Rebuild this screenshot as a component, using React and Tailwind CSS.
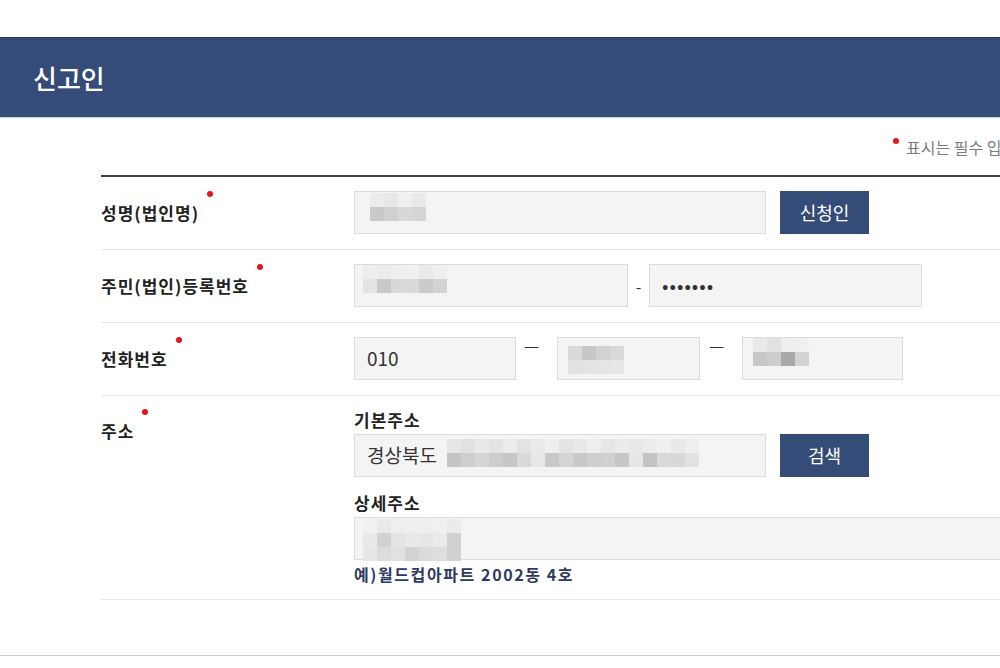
import React from "react";

const NAME_CELLS = [
  ["#ececec", "#e7e7e7", "#efefef", "#e9e9e9"],
  ["#c9c9c9", "#d0d0d0", "#d8d8d8", "#d5d5d5"],
];
const RRN_CELLS = [
  ["#eeeeee", "#ebebeb", "#efefef", "#f0f0f0", "#eaeaea", "#efefef"],
  ["#e4e4e4", "#c9c9c9", "#d8d8d8", "#d9d9d9", "#cbcbcb", "#d3d3d3"],
];
const PHONE_MID_CELLS = [
  ["#d9d9d9", "#c7c7c7", "#d2d2d2", "#d9d9d9"],
  ["#e2e2e2", "#e3e3e3", "#e5e5e5", "#e7e7e7"],
];
const PHONE_END_CELLS = [
  ["#e9e9e9", "#e2e2e2", "#eeeeee", "#f0f0f0"],
  ["#c7c7c7", "#cdcdcd", "#a9a9a9", "#d3d3d3"],
];
const ADDR_CELLS = [
  ["#e6e6e6", "#e1e1e1", "#e9e9e9", "#e4e4e4", "#ececec", "#e3e3e3", "#eaeaea", "#efefef", "#e4e4e4", "#e8e8e8", "#eeeeee", "#e6e6e6", "#ebebeb", "#e8e8e8", "#ececec", "#f0f0f0", "#e9e9e9", "#eeeeee"],
  ["#c4c4c4", "#cfcfcf", "#d6d6d6", "#cdcdcd", "#c6c6c6", "#dadada", "#e8e8e8", "#c8c8c8", "#d4d4d4", "#c9c9c9", "#cfcfcf", "#d1d1d1", "#c6c6c6", "#e6e6e6", "#c3c3c3", "#d9d9d9", "#d8d8d8", "#e2e2e2"],
];
const DETAIL_CELLS = [
  ["#f0f0f0", "#e9e9e9", "#eeeeee", "#efefef", "#eeeeee", "#f0f0f0", "#ebebeb"],
  ["#e9e9e9", "#d2d2d2", "#e4e4e4", "#e9e9e9", "#e6e6e6", "#ebebeb", "#d0d0d0"],
  ["#e6e6e6", "#dcdcdc", "#e1e1e1", "#d3d3d3", "#dbdbdb", "#dedede", "#d1d1d1"],
];

function Mosaic({ cells }) {
  return (
    <div className="flex flex-col">
      {cells.map((row, r) => (
        <div key={r} className="flex">
          {row.map((c, i) => (
            <span key={i} className="block h-[14px] w-[14px]" style={{ backgroundColor: c }} />
          ))}
        </div>
      ))}
    </div>
  );
}

function Field({ className = "", children }) {
  return (
    <div className={`flex h-[43px] border border-[#dcdcdc] bg-[#f4f4f4] text-[19px] text-[#333] ${className}`}>
      {children}
    </div>
  );
}

function NavyButton({ children }) {
  return (
    <button type="button" className="ml-[14px] h-[43px] w-[89px] bg-[#354b78] text-[18px] text-white">
      {children}
    </button>
  );
}

function Label({ children, top = false }) {
  return (
    <div className={`w-[253px] shrink-0 ${top ? "self-start pt-[9px]" : ""}`}>
      <span className="relative text-[17px] font-bold leading-[20px] tracking-[1px] text-[#222]">
        {children}
        <span className="absolute -right-[14px] -top-[9px] h-[6px] w-[6px] rounded-full bg-[#e3141b]" />
      </span>
    </div>
  );
}

export default function App() {
  return (
    <div className="h-[668px] w-[1000px] overflow-hidden bg-white font-['Noto_Sans_CJK_KR',sans-serif]">
      <div className="mt-[37px] flex h-[81px] items-center border-t border-b border-t-[#2b3c60] border-b-[#c8ced9] bg-[#354b78] pl-[33px]">
        <h2 className="text-[26px] font-medium text-white">신고인</h2>
      </div>

      <div className="h-[57px] whitespace-nowrap pl-[893px] pt-[17px]">
        <span className="relative inline-block h-[6px] w-[6px] -translate-y-[10px] rounded-full bg-[#e3141b]" />
        <span className="ml-[7px] text-[16px] text-[#7c7c7c]">표시는 필수 입력</span>
      </div>

      <div className="ml-[101px] w-[1000px] border-t-2 border-[#3b4556]">
        <div className="flex items-center border-b border-[#e6e6e6] pb-[15px] pt-[14px]">
          <Label>성명(법인명)</Label>
          <Field className="w-[412px] pl-[15px] pt-[1px]">
            <Mosaic cells={NAME_CELLS} />
          </Field>
          <NavyButton>신청인</NavyButton>
        </div>

        <div className="flex items-center border-b border-[#e6e6e6] pb-[15px] pt-[14px]">
          <Label>주민(법인)등록번호</Label>
          <Field className="w-[274px] pl-[8px]">
            <Mosaic cells={RRN_CELLS} />
          </Field>
          <span className="w-[21px] text-center text-[16px] text-[#333]">-</span>
          <Field className="w-[273px] items-center px-[12px] text-[13px] tracking-[1px]">•••••••</Field>
        </div>

        <div className="flex items-start border-b border-[#e6e6e6] pb-[15px] pt-[14px]">
          <div className="flex h-[43px] items-center">
            <Label>전화번호</Label>
          </div>
          <Field className="w-[162px] items-center px-[12px]">010</Field>
          <span className="w-[41px] pl-[8px] text-[17px] leading-[16px] text-[#333]">—</span>
          <Field className="w-[143px] pl-[10px] pt-[8px]">
            <Mosaic cells={PHONE_MID_CELLS} />
          </Field>
          <span className="w-[42px] pl-[9px] text-[17px] leading-[16px] text-[#333]">—</span>
          <Field className="w-[161px] pl-[10px]">
            <Mosaic cells={PHONE_END_CELLS} />
          </Field>
        </div>

        <div className="flex border-b border-[#e6e6e6] pb-[15px] pt-[14px]">
          <Label top>주소</Label>
          <div className="flex flex-col">
            <p className="text-[17px] font-bold leading-[20px] tracking-[1px] text-[#222]">기본주소</p>
            <div className="mt-[4px] flex">
              <Field className="w-[412px] items-center px-[12px]">
                <span>경상북도</span>
                <span className="ml-[10px] mb-[6px] flex">
                  <Mosaic cells={ADDR_CELLS} />
                </span>
              </Field>
              <NavyButton>검색</NavyButton>
            </div>
            <p className="mt-[16px] text-[17px] font-bold leading-[20px] tracking-[1px] text-[#222]">상세주소</p>
            <Field className="mt-[4px] w-[700px] pl-[8px] pt-[1px]">
              <Mosaic cells={DETAIL_CELLS} />
            </Field>
            <p className="mt-[4px] text-[16px] font-bold leading-[20px] tracking-[1.6px] text-[#2e3b5e]">예)월드컵아파트 2002동 4호</p>
          </div>
        </div>
      </div>

      <div className="h-[56px] border-b border-[#d0d0d0]" />
    </div>
  );
}
